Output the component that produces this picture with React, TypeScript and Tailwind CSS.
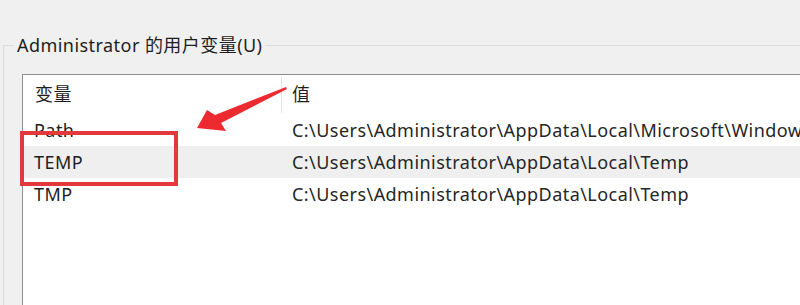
import React from "react";

const FONT = { fontFamily: '"Noto Sans", "Noto Sans CJK SC", sans-serif' };

const ROWS = [
  { name: "Path", value: "C:\\Users\\Administrator\\AppData\\Local\\Microsoft\\WindowsApps;" },
  { name: "TEMP", value: "C:\\Users\\Administrator\\AppData\\Local\\Temp", selected: true },
  { name: "TMP", value: "C:\\Users\\Administrator\\AppData\\Local\\Temp" },
];

export default function App() {
  return (
    <div
      className="relative w-[800px] h-[305px] overflow-hidden bg-[#f0f0f0] text-[18px] tracking-[0.45px] text-[#1e1e1e]"
      style={FONT}
    >
      <fieldset className="ml-[3px] mt-[34px] w-[820px] h-[300px] border-l border-t border-[#dcdcdc]">
        <legend className="ml-[10px] px-[3px] leading-[22px] whitespace-nowrap">
          Administrator 的用户变量(U)
        </legend>

        <div className="ml-[18px] mt-[18px] w-[800px] h-[240px] bg-white border-l border-t border-[#8e8e8e]">
          {/* header */}
          <div className="flex h-[39px] items-center">
            <div className="w-[258px] pl-[12px]">变量</div>
            <div className="w-px h-[36px] bg-[#e3e3e3]" />
            <div className="pl-[10px]">值</div>
          </div>

          {ROWS.map((r) => (
            <div
              key={r.name}
              className={`flex h-[32px] items-center whitespace-nowrap ${r.selected ? "bg-[#efefef]" : ""}`}
            >
              <div className="w-[259px] pl-[11px] shrink-0">{r.name}</div>
              <div className="pl-[10px] text-[#262626]">{r.value}</div>
            </div>
          ))}
        </div>
      </fieldset>

      {/* red highlight box */}
      <div className="absolute left-[20px] top-[131px] w-[158px] h-[55px] border-4 border-[#e3393d]" />

      {/* red arrow */}
      <svg className="absolute left-0 top-0" width="800" height="305" viewBox="0 0 800 305">
        <polygon
          points="197,128 207,110 215,115 286,87 287,89 221,123 226,131"
          fill="#ec2a2f"
        />
      </svg>
    </div>
  );
}
